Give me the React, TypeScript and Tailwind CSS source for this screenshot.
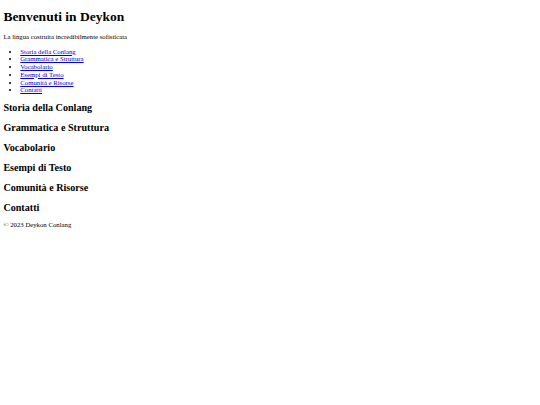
const sections = [
  "Storia della Conlang",
  "Grammatica e Struttura",
  "Vocabolario",
  "Esempi di Testo",
  "Comunità e Risorse",
  "Contatti",
];

export default function App() {
  return (
    <div className="min-h-screen bg-white pl-[3.375px] pr-[3.375px] pt-[8.5px] font-['Liberation_Serif',serif] text-[6.75px] leading-[7.76px] text-black">
      <header>
        <h1 className="mb-[9.05px] text-[13.5px] font-bold leading-[15.53px]">Benvenuti in Deykon</h1>
        <p className="mb-[6.75px]">La lingua costruita incredibilmente sofisticata</p>
        <nav>
          <ul className="mb-[8.2px] list-disc pl-[16.875px]">
            {sections.map((s) => (
              <li key={s}>
                <a href="#" className="text-[#0000ee] underline">
                  {s}
                </a>
              </li>
            ))}
          </ul>
        </nav>
      </header>

      <main>
        {sections.map((s) => (
          <section key={s}>
            <h2 className="mb-[8.2px] text-[10.125px] font-bold leading-[11.64px]">{s}</h2>
          </section>
        ))}
      </main>

      <footer>
        <p>© 2023 Deykon Conlang</p>
      </footer>
    </div>
  );
}
